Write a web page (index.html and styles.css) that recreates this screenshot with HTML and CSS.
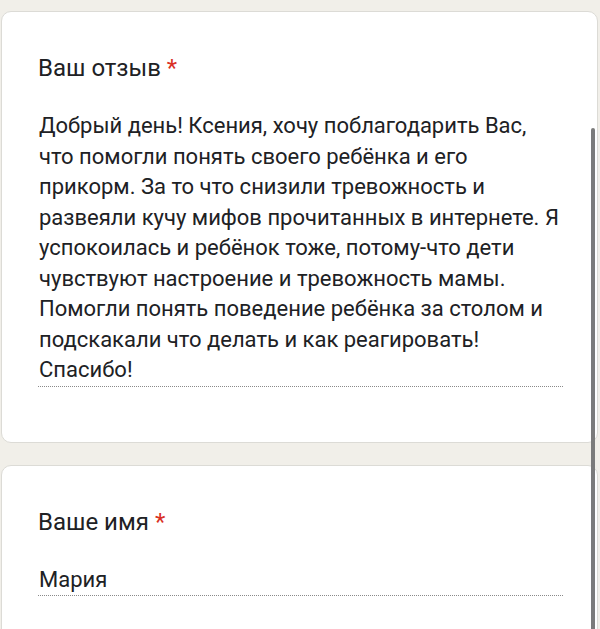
FILE: index.html
```html
<!DOCTYPE html>
<html lang="ru">
<head>
    <meta charset="utf-8" />
    <title>Отзыв</title>
    <link rel="stylesheet" href="styles.css">
</head>
<body>
    <div class="page">
        <div class="card">
            <div class="title">Ваш отзыв <span class="req">*</span></div>
            <div class="answer">Добрый день! Ксения, хочу поблагодарить Вас,<br>что помогли понять своего ребёнка и его<br>прикорм. За то что снизили тревожность и<br>развеяли кучу мифов прочитанных в интернете. Я<br>успокоилась и ребёнок тоже, потому-что дети<br>чувствуют настроение и тревожность мамы.<br>Помогли понять поведение ребёнка за столом и<br>подскакали что делать и как реагировать!<br>Спасибо!</div>
        </div>
        <div class="card">
            <div class="title">Ваше имя <span class="req">*</span></div>
            <div class="answer">Мария</div>
        </div>
    </div>
    <div class="scrollbar"></div>
</body>
</html>
```

FILE: styles.css
```css
* { box-sizing: border-box; }
html, body { margin: 0; height: 100%; overflow: hidden; }
body { background: #f1efe9; font-family: Roboto, "Noto Sans", sans-serif; color: #202124; }
.page { display: flex; flex-direction: column; gap: 22px; padding: 11px 2px 0 1px; }
.card { background: #fff; border: 1px solid #dcdbd6; border-radius: 10px; padding: 41px 34px 55px 36px; }
.title { font-size: 24px; line-height: 30px; margin-bottom: 28px; }
.req { color: #d93025; }
.answer { font-size: 22px; line-height: 30.5px; padding-left: 1px; white-space: nowrap; border-bottom: 1px dotted #8a8a8a; }
.scrollbar { position: fixed; left: 591px; top: 128px; width: 4px; height: 520px; background: #7b7b7b; border-radius: 2px; }
```
